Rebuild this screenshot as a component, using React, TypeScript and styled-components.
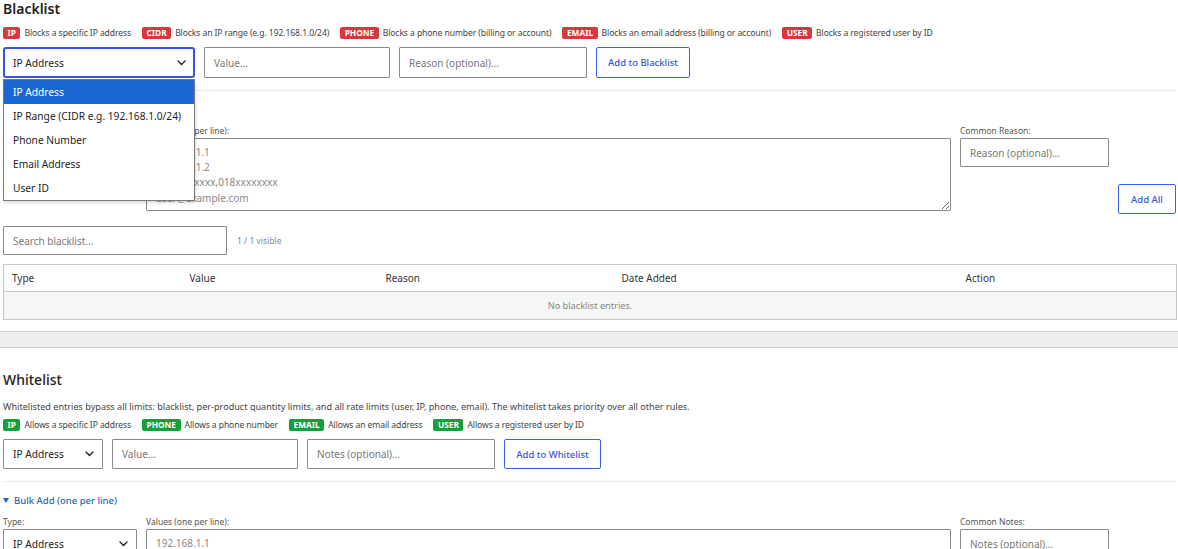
import { createGlobalStyle, styled } from "styled-components";

const GlobalStyle = createGlobalStyle`
  html, body {
    margin: 0;
    padding: 0;
    background: #fff;
  }
  body {
    font-family: "Noto Sans", "Open Sans", sans-serif;
    color: #222;
  }
  * { box-sizing: border-box; }
`;

const Page = styled.div`
  padding: 0 2px 0 3px;
  width: 1178px;
  overflow: hidden;
`;

const Section = styled.section<{ $top?: number }>`
  padding-top: ${(p) => p.$top ?? 0}px;
`;

const Title = styled.h3<{ $weight?: number }>`
  margin: 0;
  font-size: 14px;
  line-height: 18px;
  font-weight: ${(p) => p.$weight ?? 600};
  color: #222;
`;

const Description = styled.p`
  margin: 11px 0 0;
  font-size: 9.1px;
  line-height: 14px;
  color: #444;
  white-space: nowrap;
`;

const Legend = styled.div<{ $mt: number }>`
  display: flex;
  align-items: center;
  gap: 11px;
  margin-top: ${(p) => p.$mt}px;
  height: 12px;
`;

const LegendItem = styled.span`
  display: inline-flex;
  align-items: center;
  gap: 4px;
  font-size: 8.6px;
  color: #444;
  letter-spacing: -0.1px;
  white-space: nowrap;
`;

const Badge = styled.span<{ $tone: "red" | "green" }>`
  display: inline-block;
  height: 12px;
  line-height: 12px;
  padding: 0 4.5px;
  border-radius: 2px;
  font-size: 8.3px;
  font-weight: 700;
  letter-spacing: 0;
  color: #fff;
  background: ${(p) => (p.$tone === "red" ? "#d9363e" : "#12a03a")};
`;

const FormRow = styled.div`
  display: flex;
  align-items: center;
  gap: 9px;
  margin-top: 8px;
`;

const SelectWrap = styled.div`
  position: relative;
`;

const SelectBox = styled.div<{ $w: number; $h: number; $focus?: boolean }>`
  width: ${(p) => p.$w}px;
  height: ${(p) => p.$h}px;
  display: flex;
  align-items: center;
  justify-content: space-between;
  padding: 0 ${(p) => (p.$focus ? 7 : 8)}px 0 ${(p) => (p.$focus ? 8 : 9)}px;
  border: ${(p) => (p.$focus ? "2px solid #3556e0" : "1px solid #8a8a8a")};
  border-radius: ${(p) => (p.$focus ? 3 : 1)}px;
  font-size: 10.2px;
  color: #222;
  background: #fff;
`;

const Input = styled.input<{ $w: number; $h: number }>`
  width: ${(p) => p.$w}px;
  height: ${(p) => p.$h}px;
  padding: 0 9px;
  border: 1px solid #8a8a8a;
  border-radius: 1px;
  font-family: inherit;
  font-size: 10px;
  color: #222;
  outline: none;
  &::placeholder { color: #777; }
`;

const OutlineButton = styled.button<{ $w: number; $h: number }>`
  width: ${(p) => p.$w}px;
  height: ${(p) => p.$h}px;
  padding: 0;
  border: 1px solid #3a62e6;
  border-radius: 2px;
  background: #fff;
  color: #3556d8;
  font-family: inherit;
  font-size: 9.5px;
  font-weight: 500;
  cursor: pointer;
`;

const Divider = styled.hr`
  margin: 12px 0 0;
  border: 0;
  border-top: 1px solid #ebebeb;
`;

const Toggle = styled.div`
  display: flex;
  align-items: center;
  gap: 5px;
  margin-top: 12px;
  height: 12px;
  font-size: 9.5px;
  font-weight: 500;
  color: #1f67b6;
`;

const BulkRow = styled.div`
  display: flex;
  align-items: flex-end;
  gap: 9px;
  margin-top: 11px;
`;

const Field = styled.div`
  display: flex;
  flex-direction: column;
  gap: 2px;
`;

const Spacer = styled.div<{ $h: number }>`
  height: ${(p) => p.$h}px;
`;

const FieldLabel = styled.label`
  font-size: 8.5px;
  line-height: 10px;
  color: #555;
`;

const TextArea = styled.textarea<{ $w: number }>`
  display: block;
  width: ${(p) => p.$w}px;
  height: 73px;
  padding: 6px 9px 4px;
  border: 1px solid #8a8a8a;
  border-radius: 1px;
  font-family: inherit;
  font-size: 10px;
  line-height: 15.2px;
  resize: vertical;
  outline: none;
  &::placeholder { color: #888; }
`;

const AddAll = styled(OutlineButton)`
  margin-bottom: -3px;
`;

const SearchRow = styled.div`
  display: flex;
  align-items: center;
  gap: 10px;
  margin-top: 15px;
`;

const Muted = styled.span`
  font-size: 8.5px;
  color: #888;
`;

const Table = styled.table`
  margin-top: 9px;
  width: 1173px;
  border-collapse: collapse;
  border: 1px solid #c8c8c8;
  table-layout: fixed;
`;

const Th = styled.th<{ $w: number }>`
  width: ${(p) => p.$w}px;
  height: 27px;
  padding: 0 8px;
  text-align: left;
  font-size: 10px;
  font-weight: 400;
  color: #333;
  border-bottom: 1px solid #c8c8c8;
`;

const EmptyCell = styled.td`
  height: 28px;
  text-align: center;
  font-size: 9.2px;
  color: #888;
  background: #f5f6f6;
`;

const Band = styled.div`
  margin: 11px -2px 0 -3px;
  height: 17px;
  background: #efefef;
  border-top: 1px solid #cfcfcf;
  border-bottom: 1px solid #cfcfcf;
`;

const Menu = styled.ul`
  position: absolute;
  top: 32px;
  left: 0;
  width: 192px;
  margin: 0;
  padding: 0;
  list-style: none;
  background: #fff;
  border: 1px solid #7a7a7a;
  box-shadow: 1px 2px 3px rgba(0, 0, 0, 0.15);
  z-index: 10;
`;

const MenuItem = styled.li<{ $active?: boolean }>`
  height: 24px;
  line-height: 24px;
  padding-left: 9px;
  font-size: 10.2px;
  white-space: nowrap;
  color: ${(p) => (p.$active ? "#fff" : "#222")};
  background: ${(p) => (p.$active ? "#1a67d3" : "transparent")};
`;

function Chevron() {
  return (
    <svg width="9" height="6" viewBox="0 0 9 6" fill="none">
      <path d="M1 1l3.5 3.5L8 1" stroke="#222" strokeWidth="1.4" strokeLinecap="round" strokeLinejoin="round" />
    </svg>
  );
}

function Caret() {
  return (
    <svg width="6" height="5" viewBox="0 0 6 5">
      <path d="M0 0h6L3 5z" fill="#1f67b6" />
    </svg>
  );
}

const blacklistLegend = [
  ["IP", "Blocks a specific IP address"],
  ["CIDR", "Blocks an IP range (e.g. 192.168.1.0/24)"],
  ["PHONE", "Blocks a phone number (billing or account)"],
  ["EMAIL", "Blocks an email address (billing or account)"],
  ["USER", "Blocks a registered user by ID"],
];

const whitelistLegend = [
  ["IP", "Allows a specific IP address"],
  ["PHONE", "Allows a phone number"],
  ["EMAIL", "Allows an email address"],
  ["USER", "Allows a registered user by ID"],
];

const menuOptions = ["IP Address", "IP Range (CIDR e.g. 192.168.1.0/24)", "Phone Number", "Email Address", "User ID"];

const columns: [string, number][] = [
  ["Type", 178],
  ["Value", 196],
  ["Reason", 236],
  ["Date Added", 344],
  ["Action", 219],
];

const bulkPlaceholder = "192.168.1.1\n192.168.1.2\n017xxxxxxxx,018xxxxxxxx\nuser@example.com";

function BulkAdd({ noteLabel, notePlaceholder }: { noteLabel: string; notePlaceholder: string }) {
  return (
    <>
      <Toggle>
        <Caret />
        Bulk Add (one per line)
      </Toggle>
      <BulkRow>
        <Field>
          <FieldLabel>Type:</FieldLabel>
          <SelectBox $w={134} $h={30}>
            IP Address
            <Chevron />
          </SelectBox>
          <Spacer $h={41} />
        </Field>
        <Field>
          <FieldLabel>Values (one per line):</FieldLabel>
          <TextArea $w={805} placeholder={bulkPlaceholder} />
        </Field>
        <Field>
          <FieldLabel>{noteLabel}</FieldLabel>
          <Input $w={149} $h={29} placeholder={notePlaceholder} />
          <Spacer $h={42} />
        </Field>
        <AddAll $w={58} $h={30}>Add All</AddAll>
      </BulkRow>
    </>
  );
}

export default function App() {
  return (
    <>
      <GlobalStyle />
      <Page>
        <Section>
          <Title>Blacklist</Title>
          <Legend $mt={9}>
            {blacklistLegend.map(([tag, text]) => (
              <LegendItem key={tag}>
                <Badge $tone="red">{tag}</Badge>
                {text}
              </LegendItem>
            ))}
          </Legend>
          <FormRow>
            <SelectWrap>
              <SelectBox $w={192} $h={31} $focus>
                IP Address
                <Chevron />
              </SelectBox>
              <Menu>
                {menuOptions.map((o, i) => (
                  <MenuItem key={o} $active={i === 0}>{o}</MenuItem>
                ))}
              </Menu>
            </SelectWrap>
            <Input $w={186} $h={31} placeholder="Value..." />
            <Input $w={188} $h={31} placeholder="Reason (optional)..." />
            <OutlineButton $w={94} $h={31}>Add to Blacklist</OutlineButton>
          </FormRow>
          <Divider />
          <BulkAdd noteLabel="Common Reason:" notePlaceholder="Reason (optional)..." />
          <SearchRow>
            <Input $w={224} $h={29} placeholder="Search blacklist..." />
            <Muted>1 / 1 visible</Muted>
          </SearchRow>
          <Table>
            <thead>
              <tr>
                {columns.map(([c, w]) => (
                  <Th key={c} $w={w}>{c}</Th>
                ))}
              </tr>
            </thead>
            <tbody>
              <tr>
                <EmptyCell colSpan={5}>No blacklist entries.</EmptyCell>
              </tr>
            </tbody>
          </Table>
        </Section>
        <Band />
        <Section $top={23}>
          <Title $weight={500}>Whitelist</Title>
          <Description>
            Whitelisted entries bypass all limits: blacklist, per-product quantity limits, and all rate limits (user, IP, phone, email). The whitelist takes priority over all other rules.
          </Description>
          <Legend $mt={5}>
            {whitelistLegend.map(([tag, text]) => (
              <LegendItem key={tag}>
                <Badge $tone="green">{tag}</Badge>
                {text}
              </LegendItem>
            ))}
          </Legend>
          <FormRow>
            <SelectBox $w={100} $h={30}>
              IP Address
              <Chevron />
            </SelectBox>
            <Input $w={186} $h={30} placeholder="Value..." />
            <Input $w={188} $h={30} placeholder="Notes (optional)..." />
            <OutlineButton $w={97} $h={30}>Add to Whitelist</OutlineButton>
          </FormRow>
          <Divider />
          <BulkAdd noteLabel="Common Notes:" notePlaceholder="Notes (optional)..." />
        </Section>
      </Page>
    </>
  );
}
